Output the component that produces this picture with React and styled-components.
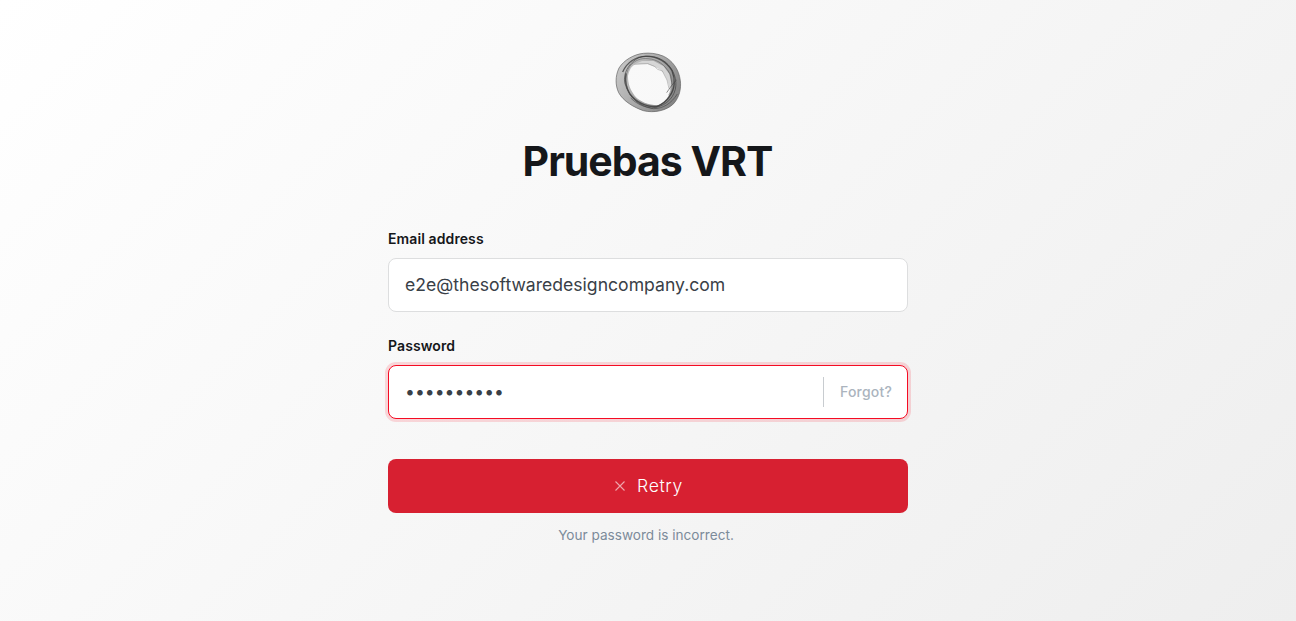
import React from 'react';
import styled, { createGlobalStyle } from 'styled-components';

const GlobalStyle = createGlobalStyle`
  *, *::before, *::after { box-sizing: border-box; }
  body { margin: 0; font-family: Inter, "Liberation Sans", sans-serif; }
`;

const Page = styled.main`
  height: 621px;
  display: flex;
  justify-content: center;
  align-items: flex-start;
  overflow: hidden;
  background: linear-gradient(315deg, #eee 0%, #fff 100%);
`;

const SigninForm = styled.form`
  width: 520px;
  display: flex;
  flex-direction: column;
  padding-top: 44px;
`;

const Header = styled.header`
  display: flex;
  flex-direction: column;
  align-items: center;
  margin-bottom: 45px;
`;

const Title = styled.h1`
  margin: 16px 0 0;
  padding-right: 1px;
  height: 50px;
  font-size: 41px;
  line-height: 50px;
  font-weight: 700;
  letter-spacing: -1px;
  color: #15171a;
`;

const Field = styled.div`
  display: flex;
  flex-direction: column;
  margin-bottom: ${(p) => p.$gap}px;
`;

const Label = styled.label`
  height: 16px;
  margin-bottom: 11px;
  line-height: 16px;
  font-size: 14px;
  font-weight: 600;
  letter-spacing: 0.1px;
  color: #15171a;
`;

const InputBox = styled.div`
  display: flex;
  align-items: center;
  height: 54px;
  border: 1px solid ${(p) => (p.$error ? '#f50b23' : '#dddedf')};
  border-radius: 8px;
  background: #fff;
  box-shadow: ${(p) => (p.$error ? '0 0 0 3px rgba(245, 11, 35, 0.15)' : 'none')};
`;

const Input = styled.input`
  flex: 1;
  min-width: 0;
  height: 100%;
  padding: 0 16px 2px;
  border: 0;
  outline: 0;
  background: transparent;
  font-family: inherit;
  font-size: 17.6px;
  font-weight: 400;
  color: #394047;
`;

const Forgot = styled.button`
  height: 30px;
  padding: 0 15px 2px 16px;
  border: 0;
  border-left: 1px solid #c8ccd0;
  background: transparent;
  font-family: inherit;
  font-size: 14px;
  font-weight: 500;
  letter-spacing: 0.2px;
  color: #abb4be;
`;

const RetryButton = styled.button`
  display: flex;
  align-items: center;
  justify-content: center;
  gap: 12px;
  height: 54px;
  padding: 0 0 0 2px;
  border: 0;
  border-radius: 8px;
  background: #d72031;
  font-family: inherit;
  font-size: 17.6px;
  font-weight: 300;
  letter-spacing: 0.6px;
  color: #fff;
`;

const RetryText = styled.span`
  padding-bottom: 2px;
`;

const Message = styled.p`
  margin: 13px 4px 0 0;
  text-align: center;
  font-size: 13.6px;
  line-height: 18px;
  color: #7c8b9a;
`;

function Logo() {
  return (
    <svg width="80" height="76" viewBox="0 0 240 228" fill="none" aria-hidden="true">
      <defs>
        <linearGradient id="ring" x1="25" y1="60" x2="215" y2="170" gradientUnits="userSpaceOnUse">
          <stop offset="0" stopColor="#c8c8c8" />
          <stop offset="0.5" stopColor="#a8a8a8" />
          <stop offset="1" stopColor="#808080" />
        </linearGradient>
      </defs>
      <path
        fillRule="evenodd"
        fill="url(#ring)"
        d="M106 28C78 31 48 48 33 72C21 98 22 124 32 146C46 172 78 190 106 200C138 208 176 200 197 179C214 160 220 134 217 110C213 75 192 48 165 36C145 28 124 26 106 28ZM82 61L118 59L156 74L177 99L191 122C192 146 178 170 152 183C124 184 96 174 80 155C66 136 60 120 60 96C64 77 71 66 82 61Z"
      />
      <path fill="#d6d6d6" d="M82 59L102 51L137 51L166 66L184 90L192 126L186 140C185 130 181 118 177 108L163 80L149 73L139 66L119 58Z" />
      <path stroke="#aaa" strokeWidth="2" d="M78 61L119 59L139 67L149 76L163 81L177 108L183 134" />
      <path stroke="#2c2c2c" strokeWidth="4" opacity="0.7" d="M44 84C56 56 84 36 116 37C150 38 176 54 192 80C203 106 201 136 184 158C174 174 160 182 146 188C112 188 84 174 66 150C54 130 50 108 54 88" />
      <path stroke="#3a3a3a" strokeWidth="2.5" opacity="0.75" d="M50 116C46 88 60 62 84 46C104 32 144 32 172 54C198 76 208 108 202 136C194 168 166 190 130 192C94 186 64 164 50 116" />
      <path stroke="#4a4a4a" strokeWidth="2" opacity="0.7" d="M66 152C52 130 48 92 66 66C82 48 98 42 120 44C150 46 172 64 186 90C194 112 192 136 182 154" />
      <path stroke="#606060" strokeWidth="2" d="M106 28C78 31 48 48 33 72C21 98 22 124 32 146C46 172 78 190 106 200C138 208 176 200 197 179C214 160 220 134 217 110C213 75 192 48 165 36C145 28 124 26 106 28Z" />
      <path stroke="#404040" strokeWidth="2.5" opacity="0.7" d="M68 162C88 182 112 190 136 194C166 194 190 178 208 150M176 146C186 132 194 118 206 108" />
    </svg>
  );
}

function CloseIcon() {
  return (
    <svg width="10" height="10" viewBox="0 0 10 10" stroke="#fff" strokeWidth="1.1" opacity="0.6" aria-hidden="true">
      <path d="M0.5 0.5L9.5 9.5M9.5 0.5L0.5 9.5" />
    </svg>
  );
}

export default function App() {
  return (
    <>
      <GlobalStyle />
      <Page>
        <SigninForm onSubmit={(e) => e.preventDefault()}>
          <Header>
            <Logo />
            <Title>Pruebas VRT</Title>
          </Header>
          <Field $gap={26}>
            <Label htmlFor="email">Email address</Label>
            <InputBox>
              <Input id="email" type="email" defaultValue="e2e@thesoftwaredesigncompany.com" spellCheck={false} />
            </InputBox>
          </Field>
          <Field $gap={40}>
            <Label htmlFor="password">Password</Label>
            <InputBox $error>
              <Input id="password" type="password" defaultValue="1234567890" />
              <Forgot type="button">Forgot?</Forgot>
            </InputBox>
          </Field>
          <RetryButton type="submit">
            <CloseIcon />
            <RetryText>Retry</RetryText>
          </RetryButton>
          <Message>Your password is incorrect.</Message>
        </SigninForm>
      </Page>
    </>
  );
}
